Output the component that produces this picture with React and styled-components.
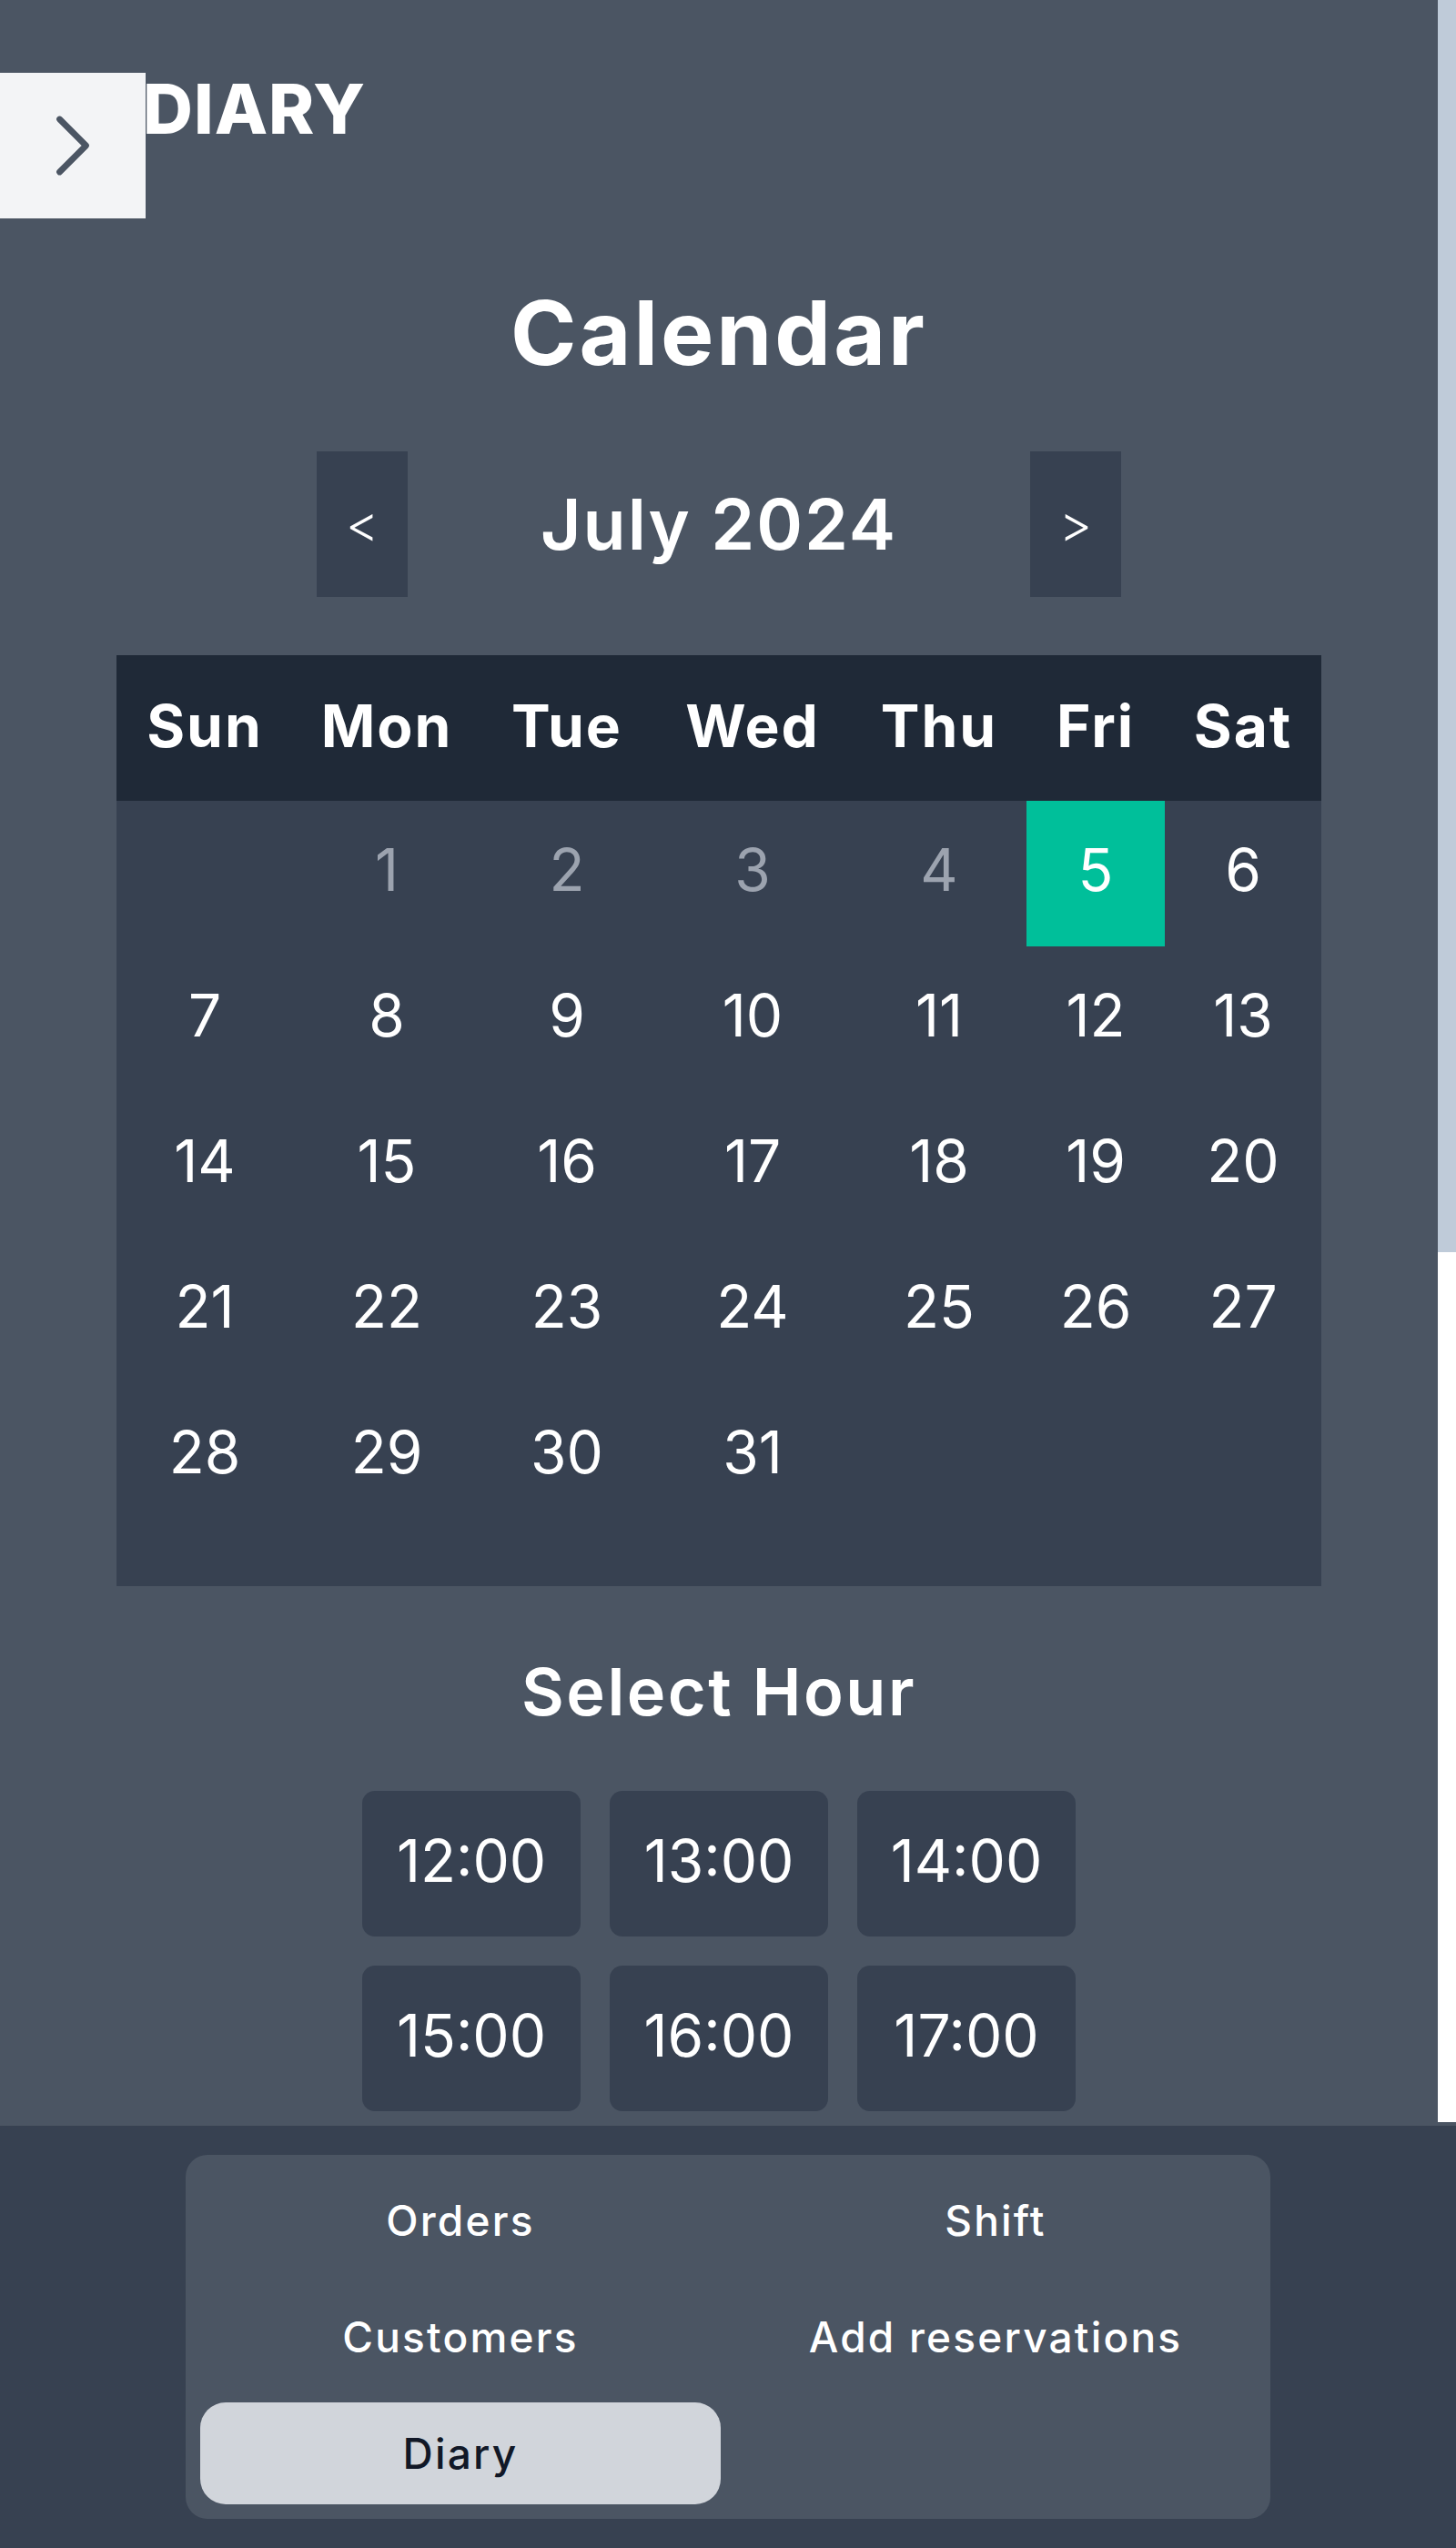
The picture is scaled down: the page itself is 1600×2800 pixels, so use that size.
import React from "react"
import styled, { createGlobalStyle } from "styled-components"
import { ChevronRight } from "lucide-react"

const GlobalStyle = createGlobalStyle`
  html, body {
    margin: 0;
    padding: 0;
    background: #4b5563;
  }
  body {
    font-family: Inter, "Liberation Sans", sans-serif;
    overflow: hidden;
  }
  * {
    box-sizing: border-box;
  }
`

const Screen = styled.div`
  display: flex;
  flex-direction: column;
  width: 1600px;
  height: 2800px;
`

const Viewport = styled.div`
  display: flex;
  height: 2332px;
  flex-shrink: 0;
`

const Main = styled.main`
  position: relative;
  flex: 1;
  overflow: hidden;
`

// the page scrolls: track on the right, thumb at the top
const ScrollTrack = styled.div`
  width: 20px;
  background: #ffffff;
`

const ScrollThumb = styled.div`
  height: 1376px;
  background: #bfcbd9;
`

const Content = styled.div`
  display: flex;
  flex-direction: column;
  align-items: center;
  color: #ffffff;
`

const SidebarToggle = styled.button`
  position: absolute;
  top: 80px;
  left: 0;
  width: 160px;
  height: 160px;
  display: flex;
  align-items: center;
  justify-content: center;
  padding: 0;
  border: none;
  background: #f3f4f6;
  color: #4b5563;
  cursor: pointer;
`

const PageTitle = styled.h1`
  align-self: flex-start;
  margin: 81px 0 0;
  padding-left: 157px;
  font-size: 76px;
  line-height: 1;
  font-weight: 800;
  letter-spacing: 1px;
`

const Heading = styled.h2`
  margin: ${p => p.$top}px 0 0;
  font-size: ${p => p.$size}px;
  line-height: 1;
  font-weight: ${p => p.$weight};
  letter-spacing: ${p => p.$spacing}px;
`

const MonthRow = styled.div`
  display: flex;
  align-items: center;
  margin-top: 81px;
  height: 160px;
`

const MonthButton = styled.button`
  width: 100px;
  height: 160px;
  padding: 0;
  border: none;
  background: #374151;
  color: #ffffff;
  font-family: inherit;
  font-size: 56px;
  font-weight: 300;
  cursor: pointer;
`

const MonthLabel = styled.div`
  width: 684px;
  text-align: center;
  font-size: 77px;
  line-height: 1;
  font-weight: 600;
  letter-spacing: 2px;
`

const CalendarGrid = styled.div`
  display: grid;
  grid-template-columns: 194px 206px 190px 218px 192px 152px 172px;
  grid-auto-rows: 160px;
  margin-top: 64px;
  padding-bottom: 63px;
  background: #374151;
`

const WeekDay = styled.div`
  display: flex;
  align-items: center;
  justify-content: center;
  padding-bottom: 6px;
  background: #1f2937;
  font-size: 64px;
  font-weight: 700;
  letter-spacing: 2px;
`

const DayCell = styled.div`
  display: flex;
  align-items: center;
  justify-content: center;
  padding-bottom: 10px;
  font-size: 64px;
  font-weight: 400;
  background: ${p => (p.$selected ? "#00bf9a" : "transparent")};
  color: ${p => (p.$past ? "#9ca3af" : "#ffffff")};
`

const HourGrid = styled.div`
  display: grid;
  grid-template-columns: repeat(3, 240px);
  grid-auto-rows: 160px;
  gap: 32px;
  margin-top: 73px;
`

const HourButton = styled.button`
  padding: 0 0 8px;
  border: none;
  border-radius: 14px;
  background: #374151;
  color: #ffffff;
  font-family: inherit;
  font-size: 64px;
  font-weight: 400;
  cursor: pointer;
`

const BottomNav = styled.nav`
  display: flex;
  justify-content: center;
  flex-shrink: 0;
  height: 468px;
  padding-top: 32px;
  border-top: 4px solid #4b5563;
  background: #374151;
`

const NavPanel = styled.div`
  display: grid;
  grid-template-columns: 1fr 1fr;
  grid-auto-rows: 112px;
  gap: 16px;
  width: 1192px;
  height: 400px;
  padding: 16px;
  border-radius: 24px;
  background: #4b5563;
`

const NavItem = styled.a`
  display: flex;
  align-items: center;
  justify-content: center;
  border-radius: 28px;
  font-size: 46px;
  font-weight: 500;
  letter-spacing: 2.2px;
  text-decoration: none;
  background: ${p => (p.$active ? "#d1d5db" : "transparent")};
  color: ${p => (p.$active ? "#111827" : "#ffffff")};
`

const weekDays = ["Sun", "Mon", "Tue", "Wed", "Thu", "Fri", "Sat"]
const hours = ["12:00", "13:00", "14:00", "15:00", "16:00", "17:00"]
const navLinks = ["Orders", "Shift", "Customers", "Add reservations", "Diary"]

// July 2024 starts on a Monday
const days = [null, ...Array.from({ length: 31 }, (_, i) => i + 1)]
const today = 5

export default function App() {
  return (
    <Screen>
      <GlobalStyle />
      <Viewport>
        <Main>
          <SidebarToggle aria-label="Open menu">
            <ChevronRight size={116} strokeWidth={1.4} />
          </SidebarToggle>
          <Content>
            <PageTitle>DIARY</PageTitle>
            <Heading $top={160} $size={98} $weight={700} $spacing={3}>
              Calendar
            </Heading>
            <MonthRow>
              <MonthButton>&lt;</MonthButton>
              <MonthLabel>July 2024</MonthLabel>
              <MonthButton>&gt;</MonthButton>
            </MonthRow>
            <CalendarGrid>
              {weekDays.map(d => (
                <WeekDay key={d}>{d}</WeekDay>
              ))}
              {days.map((d, i) => (
                <DayCell key={i} $selected={d === today} $past={d !== null && d < today}>
                  {d}
                </DayCell>
              ))}
            </CalendarGrid>
            <Heading $top={80} $size={72} $weight={600} $spacing={2.5}>
              Select Hour
            </Heading>
            <HourGrid>
              {hours.map(h => (
                <HourButton key={h}>{h}</HourButton>
              ))}
            </HourGrid>
          </Content>
        </Main>
        <ScrollTrack>
          <ScrollThumb />
        </ScrollTrack>
      </Viewport>
      <BottomNav>
        <NavPanel>
          {navLinks.map(l => (
            <NavItem key={l} href="#" $active={l === "Diary"}>
              {l}
            </NavItem>
          ))}
        </NavPanel>
      </BottomNav>
    </Screen>
  )
}
